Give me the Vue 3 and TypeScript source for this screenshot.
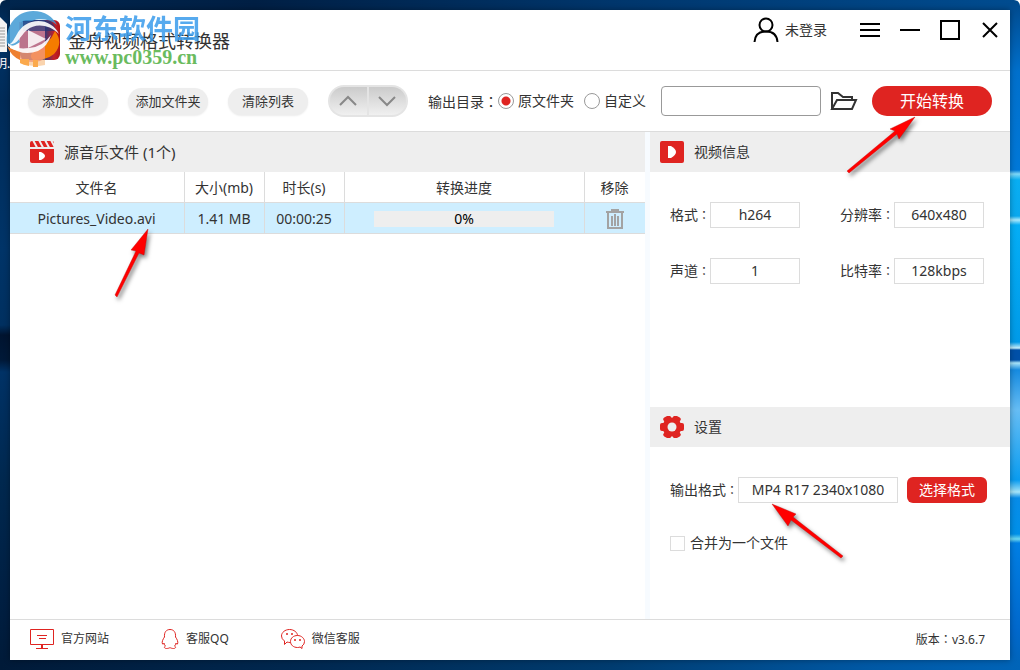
<script setup lang="ts">
import { ref } from 'vue'

interface MediaFile {
  name: string
  size: string
  duration: string
  progress: number
}
interface InfoField {
  id: string
  label: string
  value: string
}

const files = ref<MediaFile[]>([
  { name: 'Pictures_Video.avi', size: '1.41 MB', duration: '00:00:25', progress: 0 },
])
const info: InfoField[] = [
  { id: 'format', label: '格式', value: 'h264' },
  { id: 'resolution', label: '分辨率', value: '640x480' },
  { id: 'channel', label: '声道', value: '1' },
  { id: 'bitrate', label: '比特率', value: '128kbps' },
]
const target = ref<'source' | 'custom'>('source')
const customPath = ref('')
const outputFormat = ref('MP4 R17 2340x1080')
const merge = ref(false)

function removeFile(index: number) {
  files.value.splice(index, 1)
}
</script>

<template>
  <div class="desktop">
    <div class="shortcut" aria-hidden="true">
      <svg width="7" height="38" viewBox="0 0 7 38">
        <path d="M0 1L7 8V36H0Z" fill="#f3f3f3" />
        <path d="M0 12h5M0 15h5M0 18h5M0 21h5M0 24h5M0 27h5M0 30h5" stroke="#999" />
      </svg>
      <span>明.</span>
    </div>

    <main class="window">
      <header class="titlebar">
        <svg class="logo" width="42" height="42" viewBox="0 0 42 42">
          <defs>
            <linearGradient id="logoFill" x1="0" y1="0" x2="1" y2="0">
              <stop offset="0" stop-color="#1d2f6e" />
              <stop offset=".6" stop-color="#2a3a7c" />
              <stop offset=".85" stop-color="#c3202a" />
              <stop offset="1" stop-color="#b01515" />
            </linearGradient>
          </defs>
          <rect x="1" y="1" width="40" height="40" rx="6" fill="url(#logoFill)" />
          <path d="M36 12Q45 24 35 35Q28 41 14 41Q8 36 18 30Q30 26 36 12Z" fill="#f57c00" />
        </svg>
        <h1>金舟视频格式转换器</h1>
        <nav class="window-actions">
          <button class="account" type="button">
            <svg width="26" height="26" viewBox="0 0 26 26" fill="none" stroke="#000" stroke-width="2">
              <circle cx="13" cy="8" r="6.5" />
              <path d="M1.5 25C2 18 6.5 14.5 13 14.5S24 18 24.500 25" />
            </svg>
            <span>未登录</span>
          </button>
          <button type="button" aria-label="菜单">
            <svg width="20" height="20" viewBox="0 0 20 20"><path d="M0 4h20M0 10h20M0 16h20" stroke="#000" stroke-width="2" /></svg>
          </button>
          <button type="button" aria-label="最小化">
            <svg width="20" height="20" viewBox="0 0 20 20"><path d="M0 10h20" stroke="#000" stroke-width="2" /></svg>
          </button>
          <button type="button" aria-label="最大化">
            <svg width="20" height="20" viewBox="0 0 20 20"><rect x="1" y="1" width="18" height="18" fill="none" stroke="#000" stroke-width="2" /></svg>
          </button>
          <button type="button" aria-label="关闭">
            <svg width="20" height="20" viewBox="0 0 20 20"><path d="M3 3L17 17M17 3L3 17" stroke="#000" stroke-width="2" /></svg>
          </button>
        </nav>
      </header>

      <section class="toolbar">
        <div class="file-actions">
          <button class="pill" type="button">添加文件</button>
          <button class="pill" type="button">添加文件夹</button>
          <button class="pill" type="button">清除列表</button>
          <div class="mover">
            <button type="button" aria-label="上移">
              <svg width="18" height="12" viewBox="0 0 18 12"><path d="M1 10L9 2L17 10" fill="none" stroke="#888" stroke-width="2" /></svg>
            </button>
            <button type="button" aria-label="下移">
              <svg width="18" height="12" viewBox="0 0 18 12"><path d="M1 2L9 10L17 2" fill="none" stroke="#888" stroke-width="2" /></svg>
            </button>
          </div>
        </div>
        <div class="target" role="radiogroup" aria-labelledby="target-label">
          <span id="target-label">输出目录<i class="colon wide">：</i></span>
          <label class="choice"><input v-model="target" type="radio" name="target" value="source" />原文件夹</label>
          <label class="choice"><input v-model="target" type="radio" name="target" value="custom" />自定义</label>
        </div>
        <input v-model="customPath" class="path" type="text" aria-label="自定义目录" />
        <button class="browse" type="button" aria-label="浏览">
          <svg width="28" height="20" viewBox="0 0 28 20" fill="none" stroke="#333" stroke-width="2">
            <path d="M2 18V2H8L13 6H22V9M2 18L7 9H26L22 18Z" />
          </svg>
        </button>
        <button class="start" type="button">开始转换</button>
      </section>

      <div class="body">
        <section class="files">
          <h2 class="heading large">
            <svg width="24" height="22" viewBox="0 0 24 22">
              <path d="M0 8H24V20Q24 22 22 22H2Q0 22 0 20Z" fill="#df2421" />
              <path d="M0 2Q0 0 2 0H22Q24 0 24 2V6H0Z" fill="#df2421" />
              <path d="M3 -1L7 6.500M9 -1L13 6.500M15 -1L19 6.500M21 -1L25 6.500" stroke="#eee" stroke-width="2" />
              <path d="M9 11H11Q15 13 15 15T11 19H9Z" fill="#fff" />
            </svg>
            源音乐文件 ({{ files.length }}个)
          </h2>
          <table>
            <colgroup>
              <col class="c-name" /><col class="c-short" /><col class="c-short" /><col class="c-progress" /><col class="c-remove" />
            </colgroup>
            <thead>
              <tr><th>文件名</th><th>大小(mb)</th><th>时长(s)</th><th>转换进度</th><th>移除</th></tr>
            </thead>
            <tbody>
              <tr v-for="(file, index) in files" :key="file.name">
                <td>{{ file.name }}</td>
                <td>{{ file.size }}</td>
                <td>{{ file.duration }}</td>
                <td>
                  <div class="progress" role="progressbar" :aria-valuenow="file.progress">
                    <div class="bar" :style="{ width: file.progress + '%' }"></div>
                    <span>{{ file.progress }}%</span>
                  </div>
                </td>
                <td>
                  <button class="remove" type="button" aria-label="移除" @click="removeFile(index)">
                    <svg width="18" height="20" viewBox="0 0 18 20" fill="none" stroke="#a3a3a3" stroke-width="2">
                      <path d="M0 3H18M5 1H13M2 3V19H16V3" />
                      <path d="M6 7V17M9 5V17M12 7V17" />
                    </svg>
                  </button>
                </td>
              </tr>
            </tbody>
          </table>
        </section>

        <aside class="side">
          <section class="video-info">
            <h2 class="heading">
              <svg width="24" height="22" viewBox="0 0 24 22">
                <rect width="24" height="22" rx="2" fill="#df2421" />
                <path d="M8 5H11Q16 8 16 11T11 17H8Z" fill="#fff" />
              </svg>
              视频信息
            </h2>
            <div class="info-grid">
              <div v-for="field in info" :key="field.id" class="field">
                <label :for="field.id">{{ field.label }}<i class="colon">：</i></label>
                <input :id="field.id" class="box" type="text" readonly :value="field.value" />
              </div>
            </div>
          </section>
          <section class="settings">
            <h2 class="heading">
              <svg width="24" height="22" viewBox="0 0 24 22">
                <g fill="#df2421">
                  <circle cx="12" cy="11" r="9.500" />
                  <rect x="0" y="7" width="24" height="8" rx="2" />
                  <rect x="0" y="7" width="24" height="8" rx="2" transform="rotate(60 12 11)" />
                  <rect x="0" y="7" width="24" height="8" rx="2" transform="rotate(120 12 11)" />
                </g>
                <circle cx="12" cy="11" r="4.500" fill="#eee" />
              </svg>
              设置
            </h2>
            <div class="settings-body">
              <div class="field">
                <label for="output">输出格式<i class="colon">：</i></label>
                <input id="output" v-model="outputFormat" class="box output" type="text" readonly />
                <button class="choose" type="button">选择格式</button>
              </div>
              <label class="merge"><input v-model="merge" type="checkbox" />合并为一个文件</label>
            </div>
          </section>
        </aside>
      </div>

      <footer class="footer">
        <a href="#site">
          <svg width="24" height="20" viewBox="0 0 24 20" fill="none" stroke="#df2421">
            <path d="M.5 .5H23.500V15.500H.5Z" /><path d="M7 6.500H17M9 9.500H16M6 19.500H18" /><path d="M12 16V19" stroke-width="2" />
          </svg>官方网站
        </a>
        <a href="#qq">
          <svg width="18" height="20" viewBox="0 0 18 20" fill="none" stroke="#df2421">
            <path d="M3.500 8C3 3 5.500 .5 9 .5S15 3 14.500 8C16 10 17.500 13 16.500 15C15.500 15.500 15 14 15 14C15 15.500 14 16.500 13.500 17C15.500 18 14.500 19.500 12.500 19.500C11 19.500 9.500 19 9 18.500C8.500 19 7 19.500 5.500 19.500C3.500 19.500 2.500 18 4.500 17C4 16.500 3 15.500 3 14C3 14 2.500 15.500 1.500 15C.5 13 2 10 3.500 8Z" />
          </svg>客服QQ
        </a>
        <a href="#wechat">
          <svg width="24" height="20" viewBox="0 0 24 20" fill="none" stroke="#df2421">
            <path d="M9.500 13.500Q7.500 13.500 6 13L3.500 15.500V12Q.5 10 .5 7C.5 3.500 4 .5 8.500 .5C13 .5 16.500 3.500 16.500 6.500" />
            <path d="M16.500 6.500C20.500 6.500 23.500 9.500 23.500 12.500Q23.500 15.500 21 17V19.500L19 18Q18 18.500 16.500 18.500C12.500 18.500 9.500 16 9.500 12.500S12.500 6.500 16.500 6.500Z" />
            <g fill="#df2421" stroke="none"><circle cx="6" cy="5" r="1" /><circle cx="11" cy="5" r="1" /><circle cx="14" cy="11" r="1" /><circle cx="19" cy="11" r="1" /></g>
          </svg>微信客服
        </a>
        <span class="version">版本<i class="colon">：</i>v3.6.7</span>
      </footer>
    </main>

    <div class="watermark">
      <svg width="58" height="58" viewBox="0 0 58 58">
        <path d="M14 12H40V48Q36 52 28 52Q18 52 14 47Z" fill="#f08a96" opacity=".75" />
        <path d="M2 34C0 15 12 1 28 1C40 1 48 7 52 15C42 7 28 8 21 15C14 21 13 28 15 32C10 36 5 37 2 34Z" fill="#3f9ad4" opacity=".85" />
        <path d="M18 11H45Q50 14 51 21H18Z" fill="#1f3478" opacity=".65" />
        <path d="M3 35C10 33 10 22 20 15C32 7 48 11 54 24C44 14 30 13 22 20C14 27 14 34 3 35Z" fill="#fff" opacity=".9" />
        <path d="M2 36Q8 41 15 40V50Q6 46 2 36Z" fill="#ee8030" />
        <path d="M15 40H40V55Q28 58 15 53Z" fill="#f5a04c" opacity=".45" />
        <path d="M15 49H24V56Q18 55 15 53ZM28 50H33V57H28Z" fill="#fba94c" />
        <path d="M3 33Q10 40 24 38Q38 37 46 25Q43 36 33 41Q18 47 3 36Z" fill="#fff" opacity=".9" />
        <path d="M23 20L41 29L23 38Z" fill="#fff" opacity=".85" />
      </svg>
      <div class="watermark-text">
        <strong>河东软件园</strong>
        <em>www.pc0359.cn</em>
      </div>
    </div>

    <svg class="pointers" width="1020" height="670" viewBox="0 0 1020 670" aria-hidden="true">
      <g fill="#ff0000" stroke="#c00808" stroke-width=".4">
        <path d="M915 117L890 129L895 131L847 171L849 173L897 134L899 139Z" />
        <path d="M148 229L131 250L136 251L115 295L117 297L139 253L144 255Z" />
        <path d="M772 504L796 514L793 517L843 556L841 558L791 520L788 526Z" />
      </g>
    </svg>
  </div>
</template>

<style>
html, body { margin: 0; background: #fff; }
</style>

<style scoped>
* { box-sizing: border-box; }
.desktop {
  position: relative;
  display: flex;
  min-height: 100vh;
  padding: 10px;
  overflow: hidden;
  border-radius: 6px 6px 0 0;
  color: #333;
  font: 14px/20px "Noto Sans", "Noto Sans CJK SC", sans-serif;
  background:
    linear-gradient(90deg, #001a38, #002850 30%, #003c70 60%, #0058a4 85%, #0064b8) bottom / 100% 10px no-repeat,
    linear-gradient(180deg, #00488a 0, #0070cc 72px, #0078d8 170px, #7ed8f8 174px, #08aef2 180px, #0aa8ee 216px, #a9e8fc 220px, #04aef6 225px, #009ae8 342px, #c5effc 348px, #0050a8 350px, #0050a8 360px, #a8e4fa 363px, #168be0 370px, #66bdf4 410px, #0a9cf0 480px, #a5e4f8 492px, #078ce8 498px, #0090e8 534px, #6cd8f0 539px, #007fe4 543px, #0068cc 630px, #0064b8 100%) right / 10px 100% no-repeat,
    linear-gradient(180deg, #002247 0, #003468 34px, #002b58 100px, #003468 250px, #003060 325px, #001430 335px, #001938 360px, #003266 372px, #00284f 480px, #001f42 600px, #001a38 100%) left / 10px 100% no-repeat,
    linear-gradient(90deg, #00264e, #001f44 25%, #00366c 60%, #004c90);
}
.window {
  display: flex;
  flex: 1;
  flex-direction: column;
  min-width: 0;
  background: #fff;
  box-shadow: 0 0 6px rgba(0, 0, 0, .35);
}
button, input { font: inherit; color: inherit; }
button { padding: 0; border: 0; background: none; cursor: pointer; }
svg { display: block; flex: none; }
h1, h2 { margin: 0; font-weight: 400; }

.titlebar { display: flex; height: 61px; padding: 0 10px 0 9px; border-bottom: 1px solid #dcdcdc; }
.logo { margin-top: 9px; }
h1 { margin: 18px 0 0 7px; font-size: 18px; line-height: 26px; }
.window-actions { display: flex; gap: 20px; height: 40px; margin-left: auto; align-items: center; }
.account { display: flex; gap: 6px; align-items: center; margin-right: 13px; }

.toolbar { display: flex; align-items: center; height: 61px; padding: 0 18px; border-bottom: 1px solid #dcdcdc; }
.file-actions { display: flex; gap: 20px; align-items: center; }
.pill { width: 80px; height: 27px; border-radius: 14px; background: #eee; box-shadow: 0 1px 2px rgba(0, 0, 0, .08); font-size: 13px; }
.mover { display: flex; gap: 2px; width: 80px; height: 32px; padding: 2px; border-radius: 16px; background: #e4e4e4; overflow: hidden; }
.mover button { display: grid; flex: 1; place-items: center; background: linear-gradient(#cbcbcb, #f0f0f0); }
.mover button:first-child { padding-right: 2px; border-radius: 14px 0 0 14px; }
.mover button:last-child { padding-right: 2px; border-radius: 0 14px 14px 0; }
.target { display: flex; margin-left: 20px; align-items: center; }
.choice { display: flex; gap: 4px; align-items: center; }
.choice + .choice { margin-left: 10px; }
.colon { font: normal 12px/20px "Noto Sans CJK JP", sans-serif; }
.colon.wide { font-size: 14px; }
input[type="radio"] {
  width: 16px; height: 16px; margin: 0; appearance: none;
  border: 1px solid #999; border-radius: 50%; background: #fff;
}
input[type="radio"]:checked { background: radial-gradient(circle, #df2421 4px, #fff 5px); }
.path { width: 160px; height: 30px; margin-left: 15px; padding: 0 8px; border: 1px solid #999; border-radius: 4px; background: #fff; }
.browse { margin-left: 9px; }
.start { width: 120px; height: 30px; margin-left: auto; border-radius: 15px; background: #df2421; color: #fff; font-size: 16px; }

.body { display: flex; flex: 1; gap: 5px; background: #f7fbff; }
.files { flex: 1; min-width: 0; background: #fff; }
.heading { display: flex; gap: 10px; align-items: center; height: 40px; padding: 0 10px; background: #eee; font-size: 14px; }
.heading.large { padding: 0 20px; font-size: 15px; }
table { width: 100%; border-collapse: separate; border-spacing: 0; table-layout: fixed; text-align: center; }
.c-name { width: 175px; }
.c-short { width: 80px; }
.c-progress { width: 240px; }
.c-remove { width: 60px; }
th, td { height: 31px; padding: 1px 1px 0 0; border-bottom: 1px solid #dcdcdc; font-weight: 400; }
th:not(:last-child), td:not(:last-child) { border-right: 1px solid #dcdcdc; }
td { background: #ceeeff; }
.progress { position: relative; width: 180px; height: 16px; margin: 0 auto; background: #eee; color: #000; line-height: 16px; }
.bar { position: absolute; inset: 0 auto 0 0; background: #df2421; }
.progress span { position: relative; }
.remove { display: block; margin: 0 auto; }

.side { display: flex; flex: 0 0 360px; flex-direction: column; background: #fff; }
.video-info { min-height: 275px; }
.info-grid { display: grid; grid-template-columns: max-content max-content; gap: 30px 40px; padding: 30px 20px; }
.field { display: flex; align-items: center; }
.box { width: 90px; height: 26px; padding: 0 0 2px; border: 1px solid #dcdcdc; border-radius: 0; background: #fff; text-align: center; }
.output { width: 160px; }
.settings-body { padding: 30px 20px; }
.choose { width: 80px; height: 26px; margin-left: 9px; border-radius: 6px; background: #df2421; color: #fff; }
.merge { display: flex; gap: 5px; align-items: center; margin-top: 30px; }
input[type="checkbox"] { width: 15px; height: 15px; margin: 0; appearance: none; border: 1px solid #dcdcdc; background: #fff; }
input[type="checkbox"]:checked { background: #df2421; }

.footer { display: flex; align-items: center; height: 41px; padding: 0 25px 2px 20px; border-top: 1px solid #dcdcdc; font-size: 12px; }
.footer a { display: flex; gap: 7px; align-items: center; margin-right: 52px; color: inherit; text-decoration: none; }
.version { margin-left: auto; }

.shortcut { position: absolute; top: 16px; left: 0; width: 10px; height: 60px; overflow: hidden; color: #fff; font-size: 12px; }
.shortcut span { display: flex; width: 20px; margin-left: -5px; }
.watermark { position: absolute; top: 10px; left: 5px; display: flex; gap: 2px; pointer-events: none; }
.watermark-text { display: flex; flex-direction: column; }
.watermark strong { color: #3a9cec; font: 700 27px/36px "Noto Sans CJK SC", sans-serif; opacity: .85; }
.watermark em { color: #6abb5e; font: normal 700 20px/22px "Liberation Serif", serif; }
.pointers { position: absolute; top: 0; left: 0; pointer-events: none; filter: drop-shadow(2px 3px 2px rgba(0, 0, 0, .5)); }
</style>
